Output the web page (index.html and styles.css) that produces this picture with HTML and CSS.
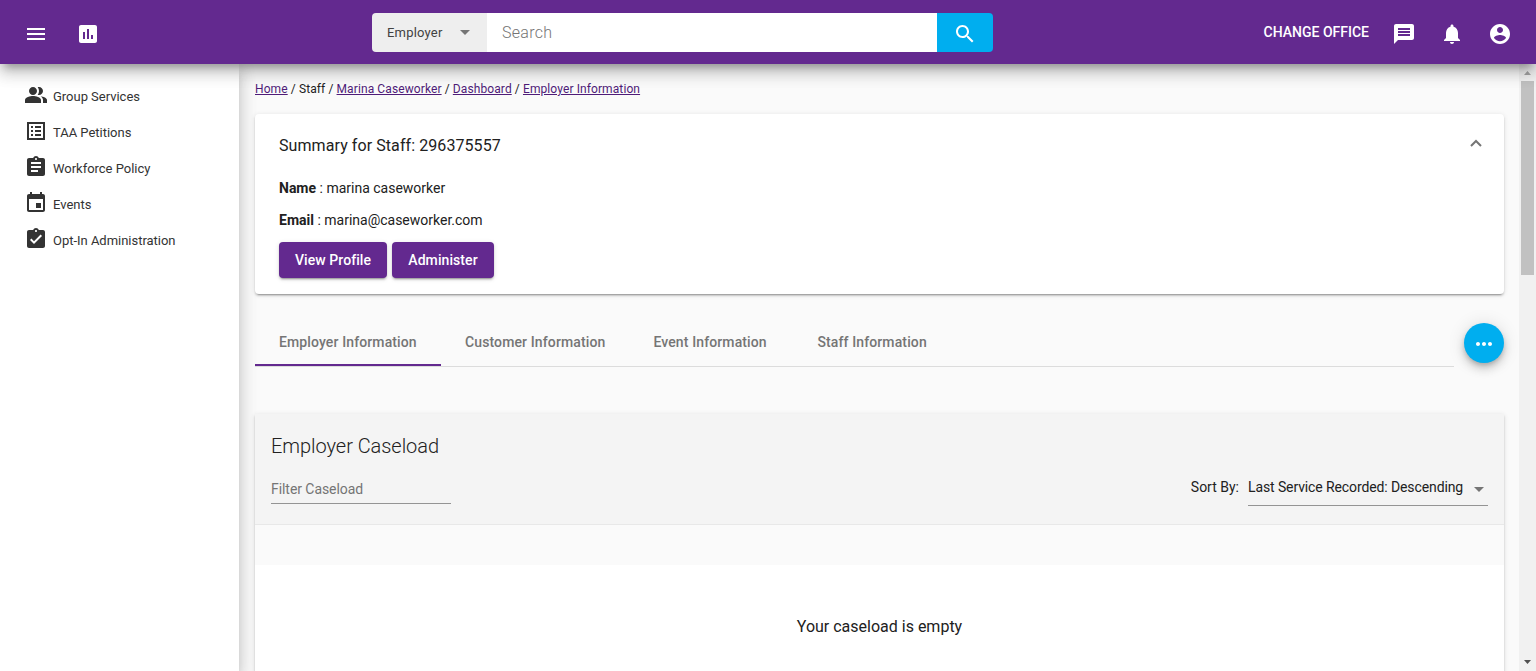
FILE: index.html
```html
<!DOCTYPE html>
<html lang="en">
<head>
<meta charset="utf-8">
<title>Employer Information</title>
<link rel="stylesheet" href="styles.css">
</head>
<body>
<div class="app">
  <header class="topbar">
    <div class="topbar-left">
      <svg class="icon" viewBox="0 0 24 24"><path d="M3 18h18v-2H3v2zm0-5h18v-2H3v2zm0-7v2h18V6H3z"/></svg>
      <svg class="icon" viewBox="0 0 24 24"><path d="M19 3H5c-1.100 0-2 .9-2 2v14c0 1.100.9 2 2 2h14c1.100 0 2-.9 2-2V5c0-1.100-.9-2-2-2zM9 17H7v-7h2v7zm4 0h-2V7h2v10zm4 0h-2v-4h2v4z"/></svg>
    </div>
    <div class="search">
      <div class="search-type"><span class="search-type-label">Employer</span><i class="caret"></i></div>
      <div class="search-input"><span class="search-placeholder">Search</span></div>
      <div class="search-button"><svg class="icon" viewBox="0 0 24 24"><path d="M15.500 14h-.790l-.280-.270C15.410 12.590 16 11.110 16 9.500 16 5.910 13.090 3 9.500 3S3 5.910 3 9.500 5.910 16 9.500 16c1.610 0 3.090-.590 4.230-1.570l.270.280v.790l5 4.990L20.490 19l-4.990-5zm-6 0C7.010 14 5 11.990 5 9.500S7.010 5 9.500 5 14 7.010 14 9.500 11.990 14 9.500 14z"/></svg></div>
    </div>
    <div class="topbar-right">
      <span class="change-office">CHANGE OFFICE</span>
      <svg class="icon" viewBox="0 0 24 24"><path d="M20 2H4c-1.100 0-1.990.9-1.990 2L2 22l4-4h14c1.100 0 2-.9 2-2V4c0-1.100-.9-2-2-2zM18 14H6v-2h12v2zm0-3H6V9h12v2zm0-3H6V6h12v2z"/></svg>
      <svg class="icon" viewBox="0 0 24 24"><path d="M12 22c1.100 0 2-.9 2-2h-4c0 1.100.890 2 2 2zm6-6v-5c0-3.070-1.640-5.640-4.500-6.320V4c0-.830-.670-1.500-1.500-1.500s-1.500.670-1.500 1.500v.680C7.630 5.360 6 7.920 6 11v5l-2 2v1h16v-1l-2-2z"/></svg>
      <svg class="icon" viewBox="0 0 24 24"><path d="M12 2C6.480 2 2 6.480 2 12s4.480 10 10 10 10-4.480 10-10S17.520 2 12 2zm0 3c1.660 0 3 1.340 3 3s-1.340 3-3 3-3-1.340-3-3 1.340-3 3-3zm0 14.200c-2.500 0-4.710-1.280-6-3.220.030-1.990 4-3.080 6-3.080 1.990 0 5.970 1.090 6 3.080-1.290 1.940-3.500 3.220-6 3.220z"/></svg>
    </div>
  </header>

  <div class="body">
    <nav class="sidebar">
      <a class="nav-item"><svg class="icon" viewBox="0 0 24 24"><path d="M16.670 13.130C18.040 14.060 19 15.320 19 17v3h4v-3c0-2.180-3.570-3.470-6.330-3.870zM15 12c2.210 0 4-1.790 4-4s-1.790-4-4-4c-.470 0-.910.100-1.330.240C14.500 5.270 15 6.580 15 8s-.500 2.730-1.330 3.760c.420.140.860.240 1.330.240zM9 12c2.210 0 4-1.790 4-4s-1.790-4-4-4-4 1.790-4 4 1.790 4 4 4zm0 1c-2.670 0-8 1.340-8 4v3h16v-3c0-2.660-5.330-4-8-4z"/></svg><span class="nav-text">Group Services</span></a>
      <a class="nav-item"><svg class="icon" viewBox="0 0 24 24"><path d="M19 5v14H5V5h14zm2-2H3v18h18V3zM11 7h6v2h-6V7zm0 4h6v2h-6v-2zm0 4h6v2h-6v-2zM7 7h2v2H7V7zm0 4h2v2H7v-2zm0 4h2v2H7v-2z"/></svg><span class="nav-text">TAA Petitions</span></a>
      <a class="nav-item"><svg class="icon" viewBox="0 0 24 24"><path d="M19 3h-4.180C14.400 1.840 13.300 1 12 1s-2.400.840-2.820 2H5c-1.100 0-2 .9-2 2v14c0 1.100.9 2 2 2h14c1.100 0 2-.9 2-2V5c0-1.100-.9-2-2-2zm-7 0c.550 0 1 .450 1 1s-.450 1-1 1-1-.450-1-1 .450-1 1-1zm2 14H7v-2h7v2zm3-4H7v-2h10v2zm0-4H7V7h10v2z"/></svg><span class="nav-text">Workforce Policy</span></a>
      <a class="nav-item"><svg class="icon" viewBox="0 0 24 24"><path d="M17 12h-5v5h5v-5zM16 1v2H8V1H6v2H5c-1.110 0-2 .9-2 2v14c0 1.100.890 2 2 2h14c1.100 0 2-.9 2-2V5c0-1.100-.9-2-2-2h-1V1h-2zm3 18H5V8h14v11z"/></svg><span class="nav-text">Events</span></a>
      <a class="nav-item"><svg class="icon" viewBox="0 0 24 24"><path d="M19 3h-4.180C14.400 1.840 13.300 1 12 1s-2.400.840-2.820 2H5c-1.100 0-2 .9-2 2v14c0 1.100.9 2 2 2h14c1.100 0 2-.9 2-2V5c0-1.100-.9-2-2-2zm-7 0c.550 0 1 .450 1 1s-.450 1-1 1-1-.450-1-1 .450-1 1-1zm-2 14l-4-4 1.410-1.410L10 14.170l6.590-6.590L18 9l-8 8z"/></svg><span class="nav-text">Opt-In Administration</span></a>
    </nav>

    <main class="content">
      <div class="breadcrumbs"><a class="link">Home</a> / Staff / <a class="link">Marina Caseworker</a> / <a class="link">Dashboard</a> / <a class="link">Employer Information</a></div>

      <section class="summary">
        <div class="summary-head"><h2 class="summary-title">Summary for Staff: 296375557</h2><svg class="chevron" viewBox="0 0 12 8"><path d="M1 7l5-5 5 5"/></svg></div>
        <p class="field"><b>Name</b> : marina caseworker</p>
        <p class="field"><b>Email</b> : marina@caseworker.com</p>
        <div class="actions"><button class="button button-profile">View Profile</button><button class="button button-admin">Administer</button></div>
      </section>

      <div class="tab-row">
        <div class="tabs">
          <div class="tab tab-active">Employer Information</div>
          <div class="tab">Customer Information</div>
          <div class="tab tab-event">Event Information</div>
          <div class="tab">Staff Information</div>
        </div>
        <div class="fab"><svg class="icon" viewBox="0 0 24 24"><path d="M6 10c-1.100 0-2 .9-2 2s.9 2 2 2 2-.9 2-2-.9-2-2-2zm12 0c-1.100 0-2 .9-2 2s.9 2 2 2 2-.9 2-2-.9-2-2-2zm-6 0c-1.100 0-2 .9-2 2s.9 2 2 2 2-.9 2-2-.9-2-2-2z"/></svg></div>
      </div>

      <section class="caseload">
        <div class="caseload-head">
          <h1 class="caseload-title">Employer Caseload</h1>
          <div class="caseload-tools">
            <div class="filter">Filter Caseload</div>
            <div class="sort"><span class="sort-label">Sort By:</span><div class="sort-select"><span class="sort-value">Last Service Recorded: Descending</span><i class="caret"></i></div></div>
          </div>
        </div>
        <div class="caseload-strip"></div>
        <div class="empty">Your caseload is empty</div>
      </section>
    </main>

    <div class="scrollbar">
      <svg class="arrow" viewBox="0 0 17 17"><path fill="#a3a3a3" d="M5 11h7L8.500 7z"/></svg>
      <div class="thumb"></div>
      <svg class="arrow arrow-down" viewBox="0 0 17 17"><path fill="#505050" d="M5 6h7L8.500 10z"/></svg>
    </div>
  </div>
</div>
</body>
</html>
```
FILE: styles.css
```css
* { box-sizing: border-box; }
body { margin: 0; font: 400 14px Roboto, sans-serif; color: #212121; overflow: hidden; }
h1, h2, p { margin: 0; }
.app { height: 671px; display: flex; flex-direction: column; overflow: hidden; }
.icon { width: 24px; height: 24px; fill: currentColor; flex: none; display: block; }
.caret { width: 0; height: 0; border: 5px solid transparent; border-top-color: #757575; border-bottom: 0; flex: none; }

.topbar { position: relative; z-index: 3; height: 64px; flex: none; background: #63298f; color: #fff; display: flex; align-items: flex-start; box-shadow: 0 8px 8px -5px rgba(0,0,0,.28), 0 10px 14px 1px rgba(0,0,0,.12), 0 4px 18px 3px rgba(0,0,0,.1); }
.topbar-left { width: 372px; padding: 22px 24px; display: flex; gap: 28px; }
.search { width: 621px; height: 39px; margin-top: 13px; display: flex; border-radius: 4px; overflow: hidden; }
.search-type { width: 115px; background: #eee; color: #424242; display: flex; align-items: center; justify-content: space-between; padding: 0 17px 0 15px; }
.search-type-label { font-size: 13px; letter-spacing: .2px; }
.search-input { flex: 1; background: #fff; color: #757575; padding-left: 15px; display: flex; align-items: center; }
.search-placeholder { font-weight: 300; font-size: 16px; letter-spacing: .3px; }
.search-button { width: 56px; background: #00aeef; padding: 9px 16px; }
.topbar-right { margin-left: auto; padding: 22px 24px 0 0; display: flex; gap: 24px; }
.change-office { font-weight: 500; font-size: 14px; line-height: 21px; margin-right: -1px; }

.body { flex: 1; min-height: 0; display: flex; background: #fafafa; }
.sidebar { position: relative; z-index: 1; width: 239px; flex: none; padding-top: 19px; background: #fff; color: #333; box-shadow: 0 8px 8px -4px rgba(0,0,0,.15), 0 8px 16px 1px rgba(0,0,0,.14), 0 4px 18px 2px rgba(0,0,0,.08); }
.nav-item { height: 36px; padding-left: 24px; display: flex; gap: 5px; }
.nav-text { font-size: 13px; line-height: 28px; letter-spacing: -.02px; }

.content { position: relative; z-index: 1; flex: 1; padding: 16px 15px 0 16px; }
.breadcrumbs { font-size: 12px; line-height: 18px; height: 34px; letter-spacing: .1px; }
.link { color: #4f1c78; text-decoration: underline; }
.summary { height: 180px; padding: 20px 22px 0 24px; background: #fff; border-radius: 4px; box-shadow: 0 3px 1px -2px rgba(0,0,0,.2), 0 2px 2px 0 rgba(0,0,0,.14), 0 1px 5px 0 rgba(0,0,0,.12); }
.summary-head { display: flex; justify-content: space-between; height: 42px; }
.summary-title { font-size: 16px; line-height: 24px; font-weight: 400; letter-spacing: .08px; }
.chevron { width: 12px; height: 8px; margin-top: 5px; fill: none; stroke: #757575; stroke-width: 2; }
.field { height: 32px; line-height: 24px; font-size: 14px; }
.actions { display: flex; gap: 5px; margin-top: 2px; }
.button { height: 36px; border: 0; border-radius: 4px; background: #63298f; color: #fff; font: 500 14px Roboto, sans-serif; letter-spacing: .08px; padding: 0; box-shadow: 0 3px 1px -2px rgba(0,0,0,.2), 0 2px 2px 0 rgba(0,0,0,.14), 0 1px 5px 0 rgba(0,0,0,.12); }
.button-profile { width: 108px; }
.button-admin { width: 102px; }

.tab-row { height: 120px; padding-top: 24px; display: flex; justify-content: space-between; }
.tabs { width: 1199px; height: 49px; display: flex; border-bottom: 1px solid #dcdcdc; }
.tab { padding: 0 24px; height: 48px; line-height: 48px; font-size: 14px; font-weight: 500; color: #757575; white-space: nowrap; letter-spacing: .12px; }
.tab-active { width: 186px; border-bottom: 2px solid #63298f; }
.tab-event { width: 164px; }
.fab { width: 40px; height: 40px; margin-top: 5px; padding: 9px 8px; border-radius: 50%; background: #00aeef; color: #fff; box-shadow: 0 3px 5px -1px rgba(0,0,0,.2), 0 6px 10px 0 rgba(0,0,0,.14), 0 1px 18px 0 rgba(0,0,0,.12); }

.caseload { height: 300px; background: #fff; box-shadow: 0 3px 1px -2px rgba(0,0,0,.2), 0 2px 2px 0 rgba(0,0,0,.14), 0 1px 5px 0 rgba(0,0,0,.12); }
.caseload-head { height: 111px; padding: 16px 16px 0; background: #f4f4f4; border-bottom: 1px solid #e8e8e8; }
.caseload-title { font-size: 20px; line-height: 32px; font-weight: 300; letter-spacing: -.05px; }
.caseload-tools { display: flex; justify-content: space-between; }
.filter { width: 180px; height: 42px; padding-top: 17px; line-height: 20px; letter-spacing: -.06px; color: #757575; border-bottom: 1px solid #949494; }
.sort { display: flex; gap: 9px; line-height: 20px; padding-top: 15px; }
.sort-select { width: 240px; height: 29px; display: flex; justify-content: space-between; border-bottom: 1px solid #949494; padding-right: 4px; }
.sort-value { white-space: nowrap; letter-spacing: -.11px; }
.sort-select .caret { margin-top: 10px; }
.caseload-strip { height: 40px; background: #fafafa; }
.empty { padding-top: 50px; line-height: 24px; font-size: 16px; text-align: center; }

.scrollbar { width: 17px; flex: none; background: #f1f1f1; display: flex; flex-direction: column; align-items: center; }
.arrow { width: 17px; height: 17px; display: block; }
.thumb { width: 13px; height: 194px; background: #c1c1c1; }
.arrow-down { margin-top: auto; }
```
